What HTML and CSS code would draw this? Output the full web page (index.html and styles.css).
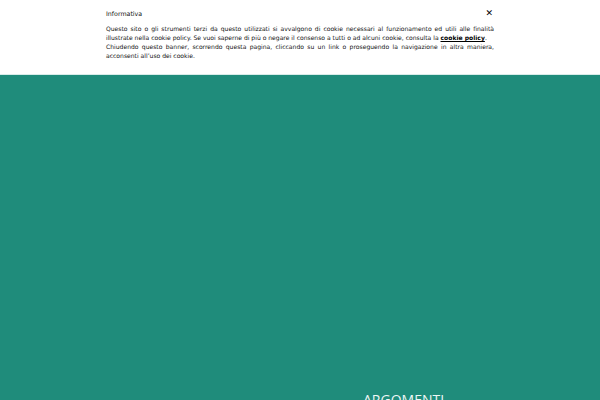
FILE: index.html
```html
<!DOCTYPE html>
<html>
<head>
<meta charset="utf-8">
<link rel="stylesheet" href="styles.css">
</head>
<body>
<div class="page">
  <div class="banner">
    <div class="banner-inner">
      <div class="banner-head">
        <span class="title">Informativa</span>
        <span class="close">✕</span>
      </div>
      <p class="text">Questo sito o gli strumenti terzi da questo utilizzati si avvalgono di cookie necessari al funzionamento ed utili alle finalità illustrate nella cookie policy. Se vuoi saperne di più o negare il consenso a tutti o ad alcuni cookie, consulta la <a class="link" href="#">cookie policy</a>.<br>Chiudendo questo banner, scorrendo questa pagina, cliccando su un link o proseguendo la navigazione in altra maniera, acconsenti all’uso dei cookie.</p>
    </div>
  </div>
  <div class="hero">
    <div class="hero-title">ARGOMENTI</div>
  </div>
</div>
</body>
</html>
```
FILE: styles.css
```css
html, body {
  margin: 0;
  padding: 0;
  height: 100%;
  overflow: hidden;
}
body {
  font-family: "DejaVu Sans", sans-serif;
  background: #1f8c7b;
  -webkit-font-smoothing: antialiased;
}
.page {
  display: flex;
  flex-direction: column;
  height: 400px;
}
.banner {
  background: #ffffff;
  height: 75px;
  box-sizing: border-box;
  border-bottom: 1px solid #d8ece9;
}
.banner-inner {
  width: 388px;
  margin: 0 auto;
  padding-top: 8px;
  color: #111;
}
.banner-head {
  display: flex;
  justify-content: space-between;
  align-items: center;
  font-size: 6.3px;
  height: 10px;
}
.close {
  font-size: 9px;
  font-weight: bold;
  color: #000;
  margin-right: 1px;
}
.text {
  margin: 6px 0 0;
  font-size: 6.05px;
  line-height: 9px;
  text-align: justify;
}
.link {
  color: #000;
  font-weight: bold;
  text-decoration: underline;
}
.hero {
  flex: 1;
  background: #1f8c7b;
  display: flex;
  flex-direction: column;
  justify-content: flex-end;
  padding-left: 363px;
}
.hero-title {
  color: #eef7f5;
  font-family: "Open Sans", sans-serif;
  font-size: 14px;
  line-height: 14px;
  margin-bottom: -7px;
}
```
